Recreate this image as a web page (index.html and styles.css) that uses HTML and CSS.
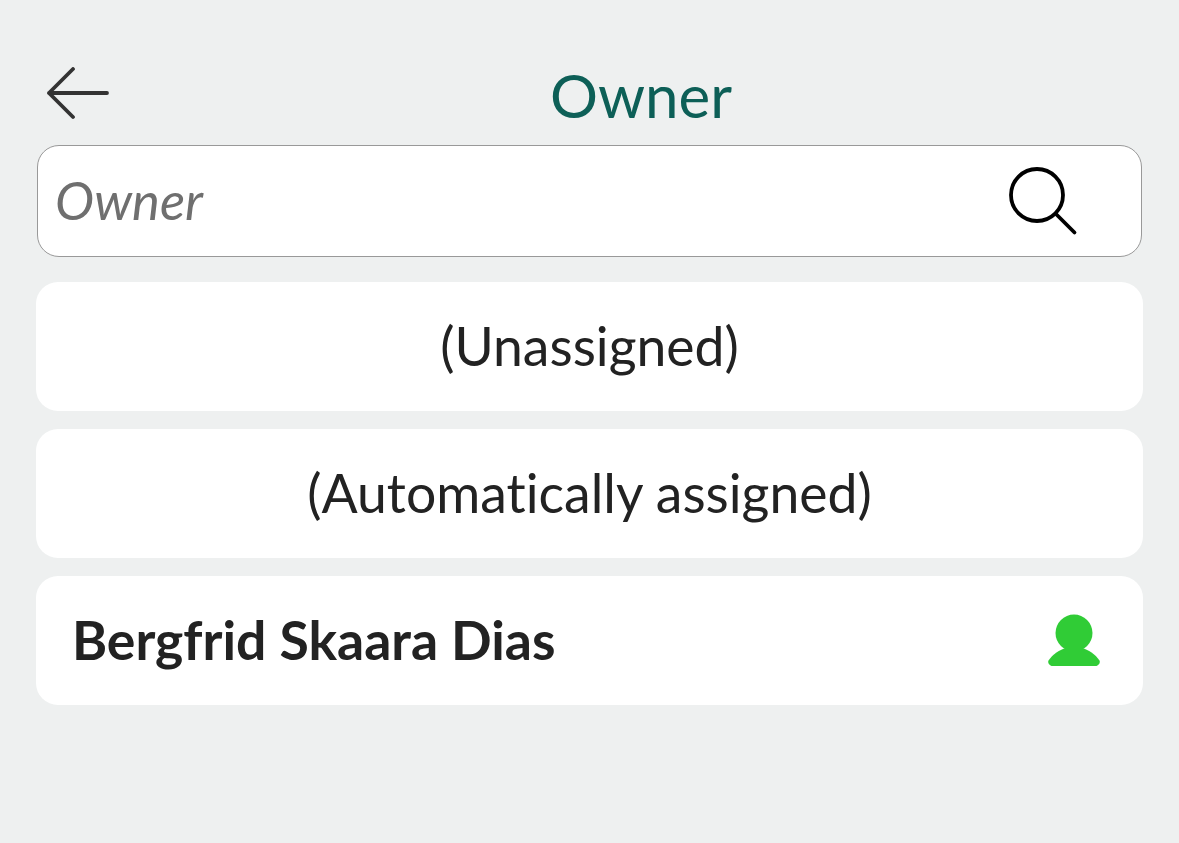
FILE: index.html
```html
<!DOCTYPE html>
<html lang="en">
<head>
<meta charset="utf-8">
<title>Owner</title>
<link rel="stylesheet" href="styles.css">
</head>
<body>
<main class="page">
  <header class="header">
    <button class="back" aria-label="Back">
      <svg class="back-icon" width="64" height="54" viewBox="0 0 64 54"><path d="M61 26H3M27 2 3 26l24 24" fill="none" stroke="#333" stroke-width="3.8" stroke-linecap="round" stroke-linejoin="round"/></svg>
    </button>
    <h1 class="title">Owner</h1>
  </header>
  <div class="search">
    <span class="placeholder">Owner</span>
    <svg class="search-icon" width="70" height="70" viewBox="0 0 70 70"><circle cx="29" cy="29" r="26" fill="none" stroke="#000" stroke-width="3.800"/><path d="M48 48 66.500 66.500" fill="none" stroke="#000" stroke-width="3.800" stroke-linecap="round"/></svg>
  </div>
  <ul class="list">
    <li class="item item-center"><span class="label">(Unassigned)</span></li>
    <li class="item item-center"><span class="label">(Automatically assigned)</span></li>
    <li class="item item-person">
      <span class="name">Bergfrid Skaara Dias</span>
      <svg class="person" width="54" height="54" viewBox="0 0 54 54"><circle cx="27" cy="19" r="18.500" fill="#30cc36"/><path d="M1.500 46.500C6 40 12 36 20 33.500h14C42 36 48 40 52.500 46.500c1 2-.5 4.500-3 5.500H4.500c-2.500-1-4-3.500-3-5.500z" fill="#30cc36"/></svg>
    </li>
  </ul>
</main>
</body>
</html>
```
FILE: styles.css
```css
* { box-sizing: border-box; }
html, body { margin: 0; height: 100%; }
body { background: #eef0f0; font-family: Lato, sans-serif; color: #222; font-variant-ligatures: none; }
.page { height: 843px; padding: 64px 36px 0; display: flex; flex-direction: column; }
.header { height: 81px; display: flex; align-items: flex-start; }
.back { border: 0; background: none; padding: 3px 0 0 10px; width: 210px; height: 60px; display: flex; flex: none; }
.title { margin: 0; width: 790px; text-align: center; font-size: 60px; line-height: 62px; font-weight: 400; color: #0d5f57; }
.search { height: 112px; margin: 0 1px 25px; background: #fff; border: 1px solid #999; border-radius: 22px; display: flex; align-items: center; justify-content: space-between; padding: 0 63px 0 17px; }
.placeholder { font-size: 52.500px; font-style: italic; color: #6f6f6f; margin-top: -3px; }
.search-icon { margin-top: 0; }
.list { list-style: none; margin: 0; padding: 0; display: flex; flex-direction: column; gap: 18px; }
.item { height: 129px; background: #fff; border-radius: 22px; display: flex; align-items: center; font-size: 53.500px; }
.item-center { justify-content: center; }
.label { margin-top: -3px; }
.item-person { justify-content: space-between; padding: 0 42px 0 36px; }
.name { font-weight: 700; font-size: 53.500px; margin-top: -4px; }
.person { margin-top: 0; }
```
